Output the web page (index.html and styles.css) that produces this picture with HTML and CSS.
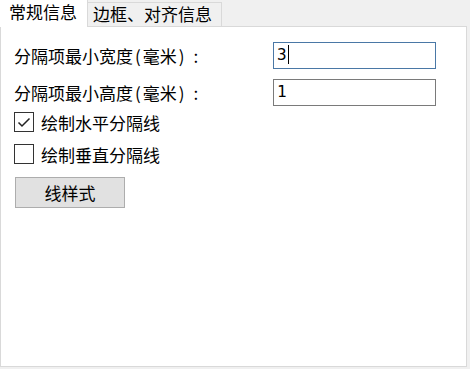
FILE: index.html
```html
<!DOCTYPE html>
<html lang="zh-CN">
  <head>
    <meta charset="UTF-8" />
    <title>分隔项设置</title>
    <link rel="stylesheet" href="styles.css">
  </head>
  <body>
    <div class="tabs">
      <div class="tab active">常规信息</div>
      <div class="tab">边框、对齐信息</div>
    </div>
    <div class="panel">
      <div class="fields">
        <label class="label">分隔项最小宽度<span class="paren">(</span>毫米<span class="paren">)</span><span class="colon">:</span></label>
        <div class="field focused">3<span class="caret"></span></div>
        <label class="label">分隔项最小高度<span class="paren">(</span>毫米<span class="paren">)</span><span class="colon">:</span></label>
        <div class="field">1</div>
      </div>
      <div class="check-row">
        <span class="box">
          <svg width="18" height="18" viewBox="0 0 18 18">
            <path d="M3.5 9.5 L7 13 L14.5 5.5" fill="none" stroke="#222" stroke-width="1.5" />
          </svg>
        </span>
        <span>绘制水平分隔线</span>
      </div>
      <div class="check-row">
        <span class="box"></span>
        <span>绘制垂直分隔线</span>
      </div>
      <div class="button">线样式</div>
    </div>
  </body>
</html>
```

FILE: styles.css
```css
body {
  margin: 0;
  background-color: #f0f0f0;
  font-family: "Microsoft YaHei", "Noto Sans CJK SC", sans-serif;
  font-size: 17px;
  color: #000;
}
.tabs {
  display: flex;
  align-items: flex-end;
  height: 26px;
}
.tab {
  box-sizing: border-box;
  height: 24px;
  width: 134px;
  padding-left: 5px;
  line-height: 22px;
  background-color: #f0f0f0;
  border-top: 1px solid #d9d9d9;
  border-right: 1px solid #d9d9d9;
}
.tab.active {
  position: relative;
  height: 27px;
  width: 88px;
  margin-bottom: -1px;
  padding-left: 9px;
  line-height: 24px;
  background-color: #fff;
  border-top: none;
}
.panel {
  box-sizing: border-box;
  width: 467px;
  height: 341px;
  padding: 15px 13px 0;
  background-color: #fff;
  border: 1px solid #d9d9d9;
}
.fields {
  display: grid;
  grid-template-columns: 259px 163px;
  grid-auto-rows: 27px;
  row-gap: 10px;
  align-items: center;
}
.label {
  line-height: 27px;
}
.paren {
  margin: 0 2px;
}
.colon {
  margin-left: 7px;
}
.field {
  box-sizing: border-box;
  height: 27px;
  padding-left: 3px;
  font-family: "DejaVu Sans Mono", monospace;
  font-size: 16px;
  line-height: 24px;
  border: 1px solid #7a7a7a;
  background-color: #fff;
}
.field.focused {
  border-color: #4a78a6;
}
.caret {
  display: inline-block;
  width: 1px;
  height: 19px;
  margin-left: 1px;
  vertical-align: -4px;
  background-color: #000;
}
.check-row {
  display: flex;
  align-items: center;
  gap: 7px;
  height: 20px;
  margin-top: 6px;
}
.check-row + .check-row {
  margin-top: 12px;
}
.box {
  box-sizing: border-box;
  display: flex;
  align-items: center;
  justify-content: center;
  width: 20px;
  height: 20px;
  border: 1px solid #333;
  background-color: #fff;
}
.button {
  box-sizing: border-box;
  width: 110px;
  height: 31px;
  margin: 13px 0 0 1px;
  line-height: 29px;
  text-align: center;
  background-color: #e1e1e1;
  border: 1px solid #adadad;
}
```
